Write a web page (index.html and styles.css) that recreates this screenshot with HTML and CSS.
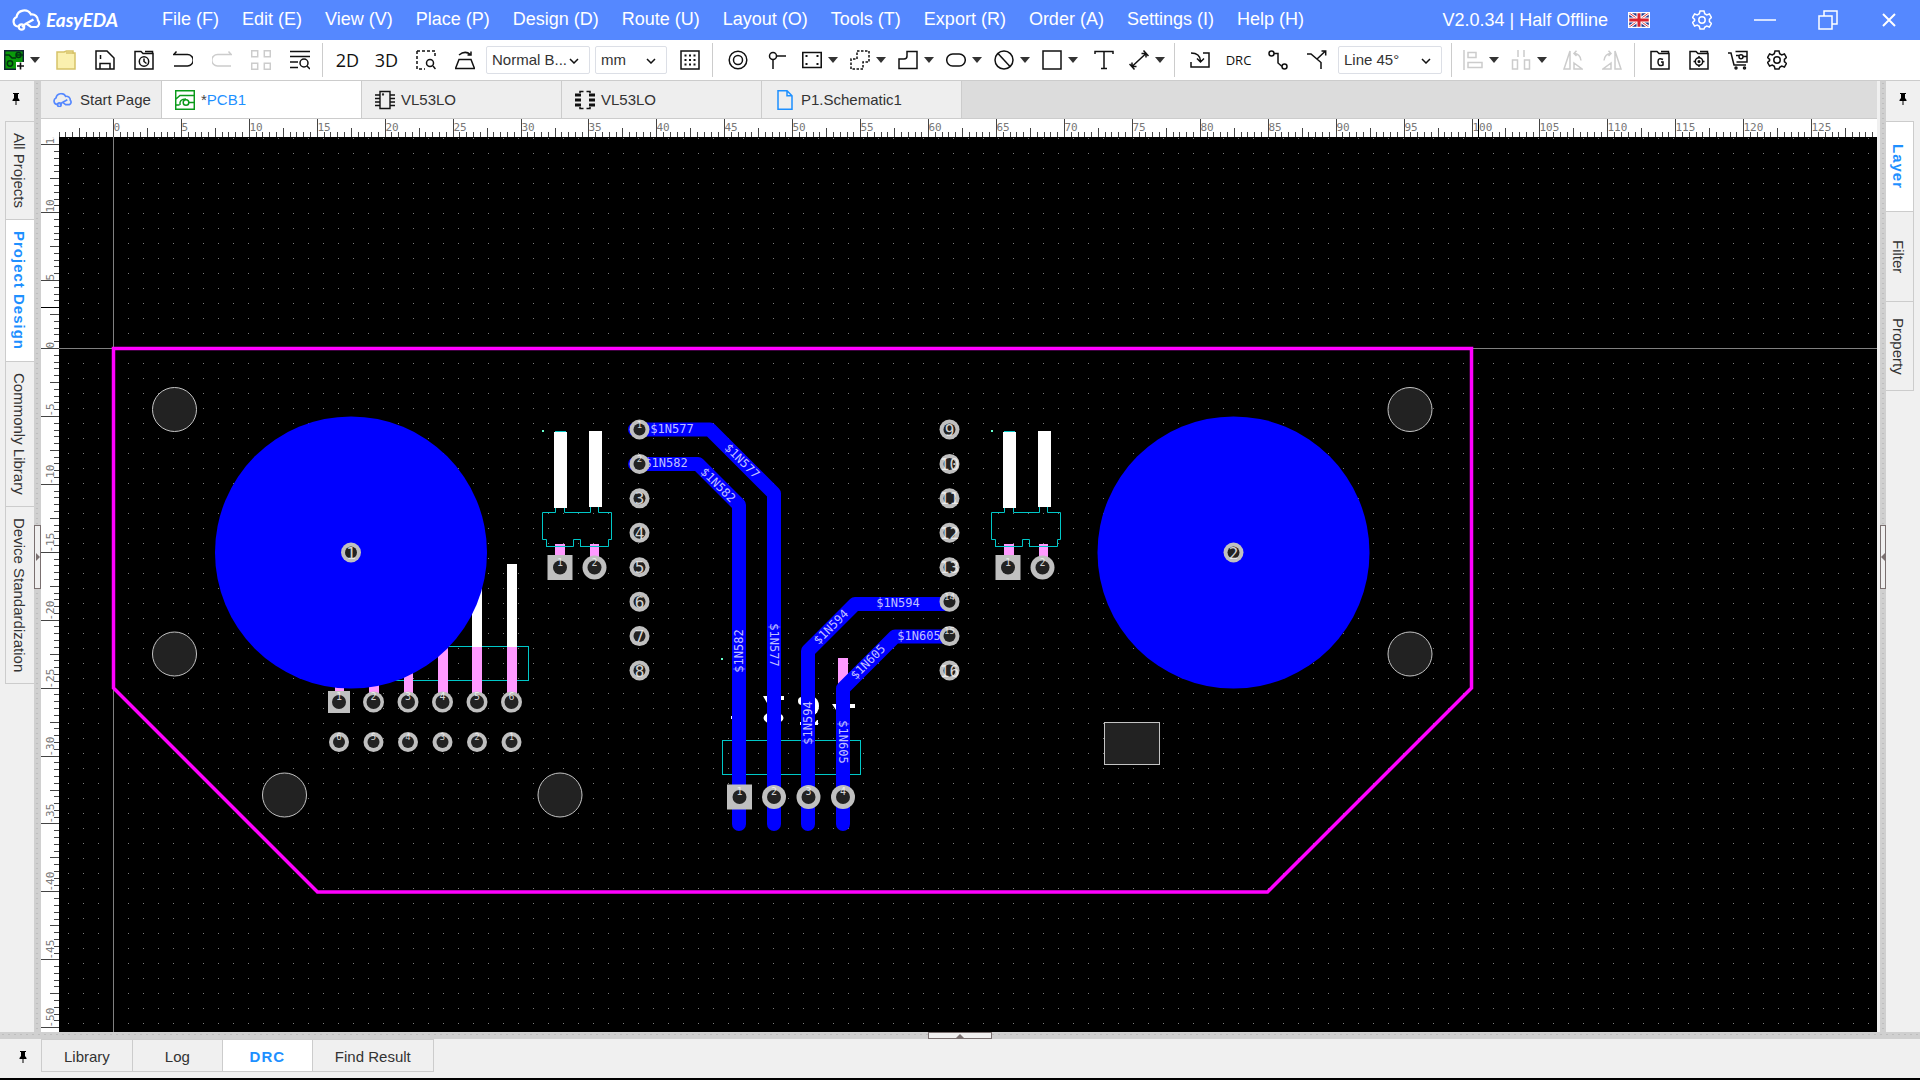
FILE: index.html
```html
<!DOCTYPE html>
<html lang="en">
<head>
<meta charset="utf-8">
<title>EasyEDA - PCB1</title>
<meta name="viewport" content="width=device-width, initial-scale=1">
<link rel="stylesheet" href="styles.css">
</head>
<body>
<svg class="sprite" aria-hidden="true">
  <symbol id="i-cloud" viewBox="0 0 30 22"><path d="M8 17.500H6A5 5 0 0 1 4.500 8a7.800 7.800 0 0 1 14.500-2.500A6 6 0 0 1 26 11.500a4 4 0 0 1-1.500 6.500h-5.500l-4-3M10 18l3.500-3 8-4.500"/><circle cx="9.500" cy="18" r="2.700"/></symbol>
  <symbol id="i-pin" viewBox="0 0 10 14"><path d="M2 1h6v1H7v4l1.500 2v1H5.500v4h-1V9h-3V8L3 6V2H2z" fill="#000" stroke="none"/></symbol>
  <symbol id="i-gear" viewBox="0 0 20 20"><path d="M8 1h4l.700 2.700 2 1.200 2.700-.900 2 3.500-2 1.900v2.200l2 1.900-2 3.500-2.700-.900-2 1.200L12 19H8l-.700-2.700-2-1.200-2.700.900-2-3.500 2-1.900V9.400l-2-1.900 2-3.500 2.700.900 2-1.200z"/><circle cx="10" cy="10" r="3.200"/></symbol>
  <symbol id="i-caret" viewBox="0 0 10 6"><path d="M0 0h10L5 6z" fill="#333" stroke="none"/></symbol>
  <symbol id="i-chev" viewBox="0 0 10 6"><path d="M1 1l4 4 4-4"/></symbol>
  <symbol id="i-chip" viewBox="0 0 20 20"><path d="M5 1.500h10v17H5zM0 5h5M0 8.500h5M0 12h5M0 15.500h5M15 5h5M15 8.500h5M15 12h5M15 15.500h5" stroke-width="1.400"/><circle cx="8" cy="4.500" r=".4"/></symbol>
  <symbol id="i-footprint" viewBox="0 0 20 20"><path d="M5 3V1.500h3.500M11.500 1.500H15V3M5 17v1.500h3.500M11.500 18.500H15V17" /><path d="M0 5h6M0 10h6M0 15h6M14 5h6M14 10h6M14 15h6" stroke-width="3"/></symbol>
</svg>

<header class="titlebar">
  <a class="brand" href="#"><svg class="brand-mark"><use href="#i-cloud"/></svg><span>EasyEDA</span></a>
  <nav class="menu" aria-label="Main menu">
    <button>File (F)</button><button>Edit (E)</button><button>View (V)</button><button>Place (P)</button><button>Design (D)</button><button>Route (U)</button><button>Layout (O)</button><button>Tools (T)</button><button>Export (R)</button><button>Order (A)</button><button>Settings (I)</button><button>Help (H)</button>
  </nav>
  <div class="window-tools">
    <span class="version">V2.0.34 | Half Offline</span>
    <button class="flag" aria-label="Language"><svg viewBox="0 0 22 16"><path fill="#223a8c" d="M0 0h22v16H0z"/><path d="M0 0l22 16M22 0L0 16" stroke="#fff" stroke-width="3"/><path d="M0 0l22 16M22 0L0 16" stroke="#d33" stroke-width="1"/><path d="M11 0v16M0 8h22" stroke="#fff" stroke-width="5"/><path d="M11 0v16M0 8h22" stroke="#d8232f" stroke-width="3"/><path d="M.5.5h21v15H.5z" fill="none" stroke="#fff"/></svg></button>
    <button aria-label="Preferences"><svg class="ico"><use href="#i-gear"/></svg></button>
    <button aria-label="Minimize"><svg class="ico wide" viewBox="0 0 24 20"><path d="M1 10h22"/></svg></button>
    <button aria-label="Restore"><svg class="ico" viewBox="0 0 20 20"><path d="M1 6h13v13H1zM6 6V1h13v13h-5"/></svg></button>
    <button aria-label="Close"><svg class="ico" viewBox="0 0 20 20"><path d="M4 4l12 12M16 4L4 16" stroke-width="2"/></svg></button>
  </div>
</header>

<div class="toolbar" role="toolbar" aria-label="Tools">
  <button class="tool drop" aria-label="New"><svg class="ico" viewBox="0 0 20 20"><path d="M.7.700h18.600v18.600H.700z" fill="#0a9a0a" stroke="#123"/><path d="M1 5h4l3 3h4M12 5h7" stroke="#031"/><circle cx="14.500" cy="5" r="2.500" stroke="#031"/><circle cx="6" cy="13.500" r="2.700" stroke="#031"/><path d="M12 12h8v8h-8z" fill="#fff" stroke="none"/><path d="M16.500 12.500v7M13 16h7" stroke-width="1.600"/></svg><svg class="caret"><use href="#i-caret"/></svg></button>
  <button class="tool" aria-label="Open"><svg class="ico" viewBox="0 0 20 20"><path d="M1 2h7l2.500-1H17v2h2v16H1z" fill="#faf0ae" stroke="#d6c268"/><path d="M10 3h8" stroke="#d6c268"/></svg></button>
  <button class="tool" aria-label="Save"><svg class="ico" viewBox="0 0 20 20"><path d="M1 1h11l7 7v11H1zM5 19v-5.500h10V19M5.500 5v4"/></svg></button>
  <button class="tool" aria-label="Recent"><svg class="ico" viewBox="0 0 20 20"><path d="M1 19V1.500h6L9 3.500h10V19zM11 1.500h7.500v2"/><circle cx="10" cy="11.500" r="4.700"/><path d="M10 8.500v3l2.500 2"/></svg></button>
  <button class="tool" aria-label="Undo"><svg class="ico" viewBox="0 0 20 20"><path d="M3.500 1.500L.700 4.500h13.800a5.700 5.700 0 0 1 0 11.400H1"/></svg></button>
  <button class="tool" aria-label="Redo" disabled><svg class="ico" viewBox="0 0 20 20"><path d="M16.500 1.500l2.800 3H5.500a5.700 5.700 0 0 0 0 11.400H19"/></svg></button>
  <button class="tool" aria-label="Array" disabled><svg class="ico" viewBox="0 0 20 20"><path d="M.700.700h6v6h-6zM13.300.700h6v6h-6zM.700 13.300h6v6h-6zM13.300 13.300h6v6h-6z"/></svg></button>
  <button class="tool" aria-label="Find"><svg class="ico" viewBox="0 0 20 20"><path d="M0 1.500h20M0 6.500h20M0 12h8M0 17.500h8"/><circle cx="14" cy="13" r="4"/><path d="M17 16l3 3"/></svg></button>
  <i class="sep"></i>
  <button class="tool text">2D</button>
  <button class="tool text">3D</button>
  <button class="tool" aria-label="Zoom to area"><svg class="ico" viewBox="0 0 20 20"><path d="M1 1h18v7M1 1v18h8" stroke-dasharray="3 2"/><circle cx="14" cy="13" r="3.500"/><path d="M17 16l2.500 3"/></svg></button>
  <button class="tool" aria-label="Flip board"><svg class="ico" viewBox="0 0 20 20"><path d="M4 9.500h12l3.500 9H.500zM4 5q6-5 11.500-.500M12.500 5H16V1.500"/></svg></button>
  <label class="pick"><select class="w-bright" aria-label="Brightness"><option>Normal B...</option></select><svg><use href="#i-chev"/></svg></label>
  <label class="pick"><select class="w-unit" aria-label="Unit"><option>mm</option></select><svg><use href="#i-chev"/></svg></label>
  <button class="tool" aria-label="Grid"><svg class="ico" viewBox="0 0 20 20"><path d="M1 1h18v18H1z"/><path d="M4.500 5.500h12M4.500 10h12M4.500 14.500h12" stroke-width="2.200" stroke-dasharray="2 2.500"/></svg></button>
  <i class="sep"></i>
  <button class="tool" aria-label="Pad"><svg class="ico" viewBox="0 0 20 20"><circle cx="10" cy="10" r="8.800"/><circle cx="10" cy="10" r="4.500"/></svg></button>
  <button class="tool" aria-label="Via"><svg class="ico" viewBox="0 0 20 20"><circle cx="6" cy="6" r="3.500"/><path d="M9.500 6H19M6 9.500V19"/></svg></button>
  <button class="tool drop" aria-label="Region"><svg class="ico" viewBox="0 0 20 20"><path d="M.700 2.500h18.600v15H.700z" stroke-width="1.700"/><path d="M3.500 6h2M14.500 6h2M3.500 14h2M14.500 14h2" stroke-width="2"/></svg><svg class="caret"><use href="#i-caret"/></svg></button>
  <button class="tool drop" aria-label="Cutout"><svg class="ico" viewBox="0 0 20 20"><path d="M7 1h12v11h-6v7H1V9h6z" stroke-dasharray="2.500 1.500"/></svg><svg class="caret"><use href="#i-caret"/></svg></button>
  <button class="tool drop" aria-label="Copper area"><svg class="ico" viewBox="0 0 20 20"><path d="M9 1.500h10v17H1V9h5q3 0 3-3z"/></svg><svg class="caret"><use href="#i-caret"/></svg></button>
  <button class="tool drop" aria-label="Fill"><svg class="ico" viewBox="0 0 20 20"><rect x=".7" y="4" width="18.600" height="12" rx="6"/></svg><svg class="caret"><use href="#i-caret"/></svg></button>
  <button class="tool drop" aria-label="Keepout"><svg class="ico" viewBox="0 0 20 20"><circle cx="10" cy="10" r="9"/><path d="M4 3.500L16 16.500"/></svg><svg class="caret"><use href="#i-caret"/></svg></button>
  <button class="tool drop" aria-label="Rectangle"><svg class="ico" viewBox="0 0 20 20"><path d="M1 1h18v18H1z"/></svg><svg class="caret"><use href="#i-caret"/></svg></button>
  <button class="tool" aria-label="Text"><svg class="ico" viewBox="0 0 20 20"><path d="M1 4V1.500h18V4M10 1.500v17M7 18.500h6"/></svg></button>
  <button class="tool drop" aria-label="Dimension"><svg class="ico" viewBox="0 0 20 20"><path d="M3 16.500L17 3.500M3 12.500v4h4.500M12.500 3.500H17v4M14.500.500l5 5.500M.500 14l5 5.500"/></svg><svg class="caret"><use href="#i-caret"/></svg></button>
  <i class="sep"></i>
  <button class="tool" aria-label="Import changes"><svg class="ico" viewBox="0 0 20 20"><path d="M13 3h6v14H1v-5M1 3q9 0 9.500 8M7 8.500l3.500 3.500L14 8.500"/></svg></button>
  <button class="tool drc">DRC</button>
  <button class="tool" aria-label="Route track"><svg class="ico" viewBox="0 0 20 20"><circle cx="3.500" cy="3.500" r="2.500"/><circle cx="16.500" cy="16.500" r="2.500"/><path d="M6 3.500h4v9.500l4 3.500"/></svg></button>
  <button class="tool" aria-label="Differential pair"><svg class="ico" viewBox="0 0 20 20"><path d="M0 4h4l10 8.500V19M9.500 9.500L18.500 1M14.500 1h4.200v4.500"/></svg></button>
  <label class="pick pick-last"><select class="w-route" aria-label="Routing corner"><option>Line 45°</option></select><svg><use href="#i-chev"/></svg></label>
  <i class="sep"></i>
  <button class="tool drop" aria-label="Align"><svg class="ico pale" viewBox="0 0 20 20"><path d="M1 0v20M5 2.500h8v5H5zM5 12.500h14v5H5z"/></svg><svg class="caret"><use href="#i-caret"/></svg></button>
  <button class="tool drop" aria-label="Distribute"><svg class="ico pale" viewBox="0 0 20 20"><path d="M7 0v7M13 0v7M1.500 10h5v9h-5zM13.500 10h5v9h-5z"/></svg><svg class="caret"><use href="#i-caret"/></svg></button>
  <button class="tool" aria-label="Rotate left" disabled><svg class="ico" viewBox="0 0 20 20"><path d="M7 1v18H1zM11 13l8 6h-8zM11 3.500q6 0 7 7M13.500.800L11 3.500 13.500 6"/></svg></button>
  <button class="tool" aria-label="Rotate right" disabled><svg class="ico" viewBox="0 0 20 20"><path d="M13 1v18h6zM9 13l-8 6h8zM9 3.500q-6 0-7 7M6.500.800L9 3.500 6.500 6"/></svg></button>
  <i class="sep"></i>
  <button class="tool" aria-label="Export Gerber"><svg class="ico" viewBox="0 0 20 20"><path d="M1 19V1.500h6L9 3.500h10V19zM11 1.500h7.500v2M13 9.500q-5-2.500-5 2.500t5 3v-3h-2"/></svg></button>
  <button class="tool" aria-label="Export coordinates"><svg class="ico" viewBox="0 0 20 20"><path d="M1 19V1.500h6L9 3.500h10V19zM11 1.500h7.500v2M10 6v2M10 15v2M4.500 11.500h2M13.500 11.500h2"/><circle cx="10" cy="11.500" r="3.700"/><circle cx="10" cy="11.500" r=".8"/></svg></button>
  <button class="tool" aria-label="Order PCB"><svg class="ico" viewBox="0 0 20 20"><path d="M0 3h3l3 12h12M7.500 1.500H19v10.500H8.500M8 5.500h3M15 6.500h4"/><circle cx="13" cy="6.800" r="2"/><circle cx="8" cy="18" r="1"/><circle cx="16.500" cy="18" r="1"/></svg></button>
  <button class="tool" aria-label="Settings"><svg class="ico"><use href="#i-gear"/></svg></button>
</div>

<div class="workspace">
  <aside class="side left">
    <div class="side-body">
      <button class="pin" aria-label="Pin left panel"><svg><use href="#i-pin"/></svg></button>
      <button class="vtab">All Projects</button>
      <button class="vtab active">Project Design</button>
      <button class="vtab">Commonly Library</button>
      <button class="vtab">Device Standardization</button>
    </div>
    <div class="splitter"><button class="grip" aria-label="Expand left panel"></button></div>
  </aside>

  <main class="editor">
    <nav class="tabs" aria-label="Documents">
      <button class="tab start"><svg class="ico blue" viewBox="0 0 30 22"><use href="#i-cloud"/></svg>Start Page</button>
      <button class="tab active"><svg class="ico green" viewBox="0 0 20 20"><path d="M.700.700h18.600v18.600H.700zM1 9l4-3.500h14M1 15h3.500"/><circle cx="11" cy="12.500" r="2.800"/><path d="M14 12.500h5M5 15q-1-6 6-6"/></svg><span><span class="dirty">*</span>PCB1</span></button>
      <button class="tab"><svg class="ico"><use href="#i-chip"/></svg>VL53LO</button>
      <button class="tab"><svg class="ico"><use href="#i-footprint"/></svg>VL53LO</button>
      <button class="tab"><svg class="ico doc" viewBox="0 0 20 20"><path d="M3 .700h9l5 5v13.600H3zM12 .700v5h5"/></svg>P1.Schematic1</button>
    </nav>
    <div class="stage">
      <div class="corner"></div>
      <svg class="ruler" id="ruler-x"></svg>
      <svg class="ruler" id="ruler-y"></svg>
      <svg class="board" role="img" aria-label="PCB layout">
        <defs>
          <pattern id="dots" width="15" height="15" patternUnits="userSpaceOnUse" x="8" y="3"><path d="M0 0h1v1H0z" fill="#7c7c7c"/></pattern>
          <g id="jumper">
            <path d="M542 430h2v2h-2z" fill="#6fc"/>
            <path d="M555 431.500h11M555.500 508v4.500h-13v27h4v7h27v-7h7v7h28v-7h3v-27h-13V507M564.500 508v4.500h26V507" fill="none" stroke="#00c8c8"/>
            <path d="M554 432h13v76h-13zM589 431h13v76h-13z" fill="#fff"/>
            <path d="M555 544h10v14h-10zM590 544h9v14h-9z" fill="#f9f"/>
            <path d="M546 546.500h27M580 546.500h28" stroke="#00c8c8"/>
          </g>
        </defs>
        <!-- drawing units are pixels; the shift puts the board origin on the ruler zero -->
        <g transform="translate(-59 -137)">
          <rect x="59" y="137" width="100%" height="100%" fill="url(#dots)"/>
          <path d="M113.500 137v4000M59 348.500h5000" stroke="#808080"/>
          <g fill="#222" stroke="#c4c4c4">
            <circle cx="174.500" cy="409.500" r="22"/><circle cx="174.500" cy="654" r="22"/>
            <circle cx="1410" cy="409.500" r="22"/><circle cx="1410" cy="654" r="22"/>
            <circle cx="284.500" cy="795" r="22"/><circle cx="560" cy="795" r="22"/>
            <rect x="1104.500" y="722.500" width="55" height="42"/>
          </g>
          <rect x="322.500" y="646.500" width="206" height="34" fill="none" stroke="#00c8c8"/>
          <path d="M507 564h10v83h-10zM472 564h10v83h-10z" fill="#fff"/>
          <path d="M335 647h9v50h-9zM369 647h10v50h-10zM404 647h9v50h-9zM438 647h10v50h-10zM472 647h10v50h-10zM507 647h10v50h-10z" fill="#f9f"/>
          <use href="#jumper"/><use href="#jumper" x="449"/>
          <rect x="722.500" y="740.500" width="138" height="34" fill="none" stroke="#00c8c8"/>
          <path d="M721 658h2v2h-2z" fill="#6fc"/>
          <path d="M838 658h10v30h-10z" fill="#f9f"/>
          <path d="M763 696h21v4h-3l-14 3zM731 716h3v3h-3zM832 704h23v4h-6l-13 2zM800 722h4l8 4 5-6h1v5h-18z" fill="#fff"/>
          <ellipse cx="773.500" cy="718" rx="10" ry="6" fill="#fff"/><ellipse cx="802" cy="701" rx="4" ry="4" fill="#fff"/><ellipse cx="813" cy="706" rx="6" ry="9" fill="#fff"/>
          <g fill="none" stroke="#00f" stroke-width="14" stroke-linecap="round" stroke-linejoin="round">
            <path d="M635 429.500h75l64 64V824"/>
            <path d="M635 464h63l41 41V824"/>
            <path d="M949 604h-94l-47 47V824"/>
            <path d="M949 636.500h-54l-52 52V824"/>
          </g>
          <g fill="#00f"><circle cx="351" cy="552.500" r="136"/><circle cx="1233.500" cy="552.500" r="136"/></g>
          <g class="nets" id="nets"></g>
          <g id="pads"></g>
          <path d="M113.500 348.500h1358v339.500l-204 204H317.500l-204-204z" fill="none" stroke="#f0f" stroke-width="3.500"/>
        </g>
      </svg>
    </div>
  </main>

  <aside class="side right">
    <div class="splitter"><button class="grip" aria-label="Expand right panel"></button></div>
    <div class="side-body">
      <button class="pin" aria-label="Pin right panel"><svg><use href="#i-pin"/></svg></button>
      <button class="vtab active">Layer</button>
      <button class="vtab">Filter</button>
      <button class="vtab">Property</button>
    </div>
  </aside>
</div>

<footer class="bottom">
  <div class="splitter"><button class="grip" aria-label="Expand bottom panel"></button></div>
  <div class="bottom-body">
    <button class="pin" aria-label="Pin bottom panel"><svg><use href="#i-pin"/></svg></button>
    <button class="btab">Library</button>
    <button class="btab">Log</button>
    <button class="btab active">DRC</button>
    <button class="btab">Find Result</button>
  </div>
</footer>
<script src="board.js"></script>
</body>
</html>
```

FILE: styles.css
```css
* { box-sizing: border-box; }

html, body { height: 100%; }

body {
  margin: 0;
  display: flex;
  flex-direction: column;
  border-bottom: 2px solid #000;
  background: #f0f0f0;
  color: #333;
  font: 15px/20px "Liberation Sans", Arial, sans-serif;
  overflow: hidden;
}

button {
  margin: 0;
  padding: 0;
  border: 0;
  background: none;
  color: inherit;
  font: inherit;
  white-space: nowrap;
}

svg { display: block; fill: none; stroke: currentColor; stroke-width: 1.5; }
.sprite { display: none; }
.ico { width: 20px; height: 20px; flex: none; }

/* title bar */
.titlebar {
  flex: none;
  height: 40px;
  display: flex;
  align-items: center;
  padding: 0 1px 0 12px;
  background: #5588ff;
  color: #fff;
  font-size: 18px;
}
.brand {
  width: 150px;
  display: flex;
  align-items: center;
  gap: 4px;
  color: #fff;
  text-decoration: none;
  font: italic 700 19px/24px Lato, "Open Sans", sans-serif;
}
.brand-mark { width: 30px; height: 22px; stroke-width: 2.2; }
.menu { display: flex; gap: 23px; height: 32px; }
.menu button { height: 30px; }
.window-tools { margin-left: auto; display: flex; align-items: center; }
.window-tools button { width: 63px; display: flex; justify-content: center; }
.window-tools button:last-child { width: 60px; }
.version { height: 20px; }
.window-tools .flag { width: 62px; }
.flag svg { width: 22px; height: 16px; }
.wide { width: 24px; }

/* toolbar */
.toolbar {
  flex: none;
  height: 41px;
  display: flex;
  align-items: center;
  margin-left: -2px;
  border-bottom: 1px solid #ccc;
  background: #fff;
  color: #111;
}
.tool { flex: none; width: 39px; height: 32px; display: flex; align-items: center; justify-content: center; }
.tool.drop { width: 48px; gap: 6px; }
.tool:disabled, .pale { color: #ccc; }
.tool.text { font: 18px/24px "Open Sans", sans-serif; }
.tool.drc { font: 13px/20px "Open Sans", sans-serif; }
.caret { width: 10px; height: 6px; flex: none; }
.sep { flex: none; width: 1px; height: 34px; margin: 0 5px 0 3px; background: #ccc; }
.pick { flex: none; position: relative; margin: 0 3px 0 2px; }
.pick-last { margin-right: 6px; }
.pick select {
  height: 28px;
  padding: 0 5px;
  border: 1px solid #dcdfe6;
  border-radius: 2px;
  appearance: none;
  background: #fff;
  color: #333;
  font: inherit;
}
.pick svg { position: absolute; right: 11px; top: 12px; width: 10px; height: 6px; pointer-events: none; }
.w-bright { width: 104px; }
.w-unit { width: 72px; }
.w-route { width: 104px; }

/* side panels */
.workspace { flex: 1; min-height: 0; display: flex; }
.side { flex: none; display: flex; }
.side-body { display: flex; flex-direction: column; }
.left .side-body { width: 34px; padding-left: 5px; }
.right .side-body { width: 34px; padding-right: 6px; }
.pin { display: flex; align-items: center; justify-content: center; }
.pin svg { width: 10px; height: 14px; }
.side .pin { height: 40px; padding-bottom: 4px; flex: none; }
.left .pin { width: 22px; }
.right .pin { width: 34px; }
.vtab {
  display: flex;
  align-items: center;
  justify-content: center;
  padding: 11px 2px 11px 0;
  border: 1px solid #ccc;
  border-bottom-width: 0;
  writing-mode: vertical-rl;
}
.vtab:last-child { border-bottom-width: 1px; }
.left .vtab { border-right: 0; }
.right .vtab { border-left: 0; height: 90px; padding-right: 4px; }
.active { background: #fff; color: #1e90ff; }
.vtab.active, .btab.active { font-weight: 700; letter-spacing: 1px; }

.splitter {
  flex: none;
  display: flex;
  align-items: center;
  justify-content: center;
  background: radial-gradient(circle, #bdbdbd 1px, transparent 1px) 0 0 / 6px 5px #d0d0d0;
}
.side .splitter { width: 7px; }
.right .splitter { width: 6px; }
.grip { border: 1px solid #7a7070; background: #f0f0f0; display: flex; align-items: center; justify-content: center; }
.side .grip { width: 100%; height: 64px; }
.grip::before { content: ""; border: 4px solid transparent; }
.left .grip::before { border-left-color: #7a7070; border-right-width: 0; }
.right .grip::before { border-right-color: #7a7070; border-left-width: 0; }
.bottom .grip::before { border-bottom-color: #7a7070; border-top-width: 0; }

/* document tabs */
.editor { flex: 1; min-width: 0; display: flex; flex-direction: column; margin-right: 3px; }
.tabs { flex: none; height: 38px; display: flex; border-bottom: 1px solid #ccc; background: #dcdcdc; }
.tab {
  width: 200px;
  display: flex;
  align-items: center;
  gap: 6px;
  padding-left: 13px;
  border-right: 1px solid #ccc;
  background: #eee;
}
.tab.start { width: 121px; padding-left: 12px; gap: 7px; }
.tab.active { background: #fff; }
.tab svg { color: #111; }
.tab .blue { color: #5588ff; stroke-width: 2.5; }
.tab .green { color: #0a9a1a; }
.tab .doc { color: #1e90ff; }
.dirty { color: #444; }

/* canvas */
.stage {
  flex: 1;
  min-height: 0;
  display: grid;
  grid-template: 18px minmax(0, 1fr) / 18px minmax(0, 1fr);
}
.corner, .ruler { background: #fff; }
.ruler, .board { width: 100%; height: 100%; overflow: hidden; }
.ruler { stroke: #444; stroke-width: 1; }
.ruler text { fill: #777; stroke: none; font: 11px "DejaVu Sans Mono", monospace; }
.board { background: #000; stroke: none; stroke-width: 1; }
.board text { font-family: "DejaVu Sans Mono", monospace; text-anchor: middle; stroke: none; }
.nets text { fill: #c0c0ff; font-size: 12px; }
.pad { fill: #c0c0c0; }
.drill { fill: #222; }
.num { fill: #f4f4f4; fill-opacity: .85; font-size: 10px; }
.num.small { font-size: 9px; }
.num.big { font-size: 16px; }

/* bottom panel */
.bottom { flex: none; }
.bottom .splitter { height: 7px; }
.bottom .grip { width: 64px; height: 7px; }
.bottom-body { height: 39px; display: flex; align-items: flex-start; }
.bottom .pin { width: 41px; height: 36px; padding-left: 4px; }
.btab { height: 33px; min-width: 90px; padding: 3px 22px 0; border: 1px solid #ccc; border-left-width: 0; }
.pin + .btab { border-left-width: 1px; }
```

FILE: board.js
```js
const NS = 'http://www.w3.org/2000/svg';
const PX_PER_MM = 13.585;

function add(parent, name, attrs, text) {
  const node = document.createElementNS(NS, name);
  for (const key in attrs) node.setAttribute(key, attrs[key]);
  if (text !== undefined) node.textContent = text;
  parent.appendChild(node);
}

/* rulers: a tick each 0.5 mm, a longer one each 2.5 mm, a label each 5 mm */
const rx = document.getElementById('ruler-x');
const ry = document.getElementById('ruler-y');
const tickLength = i => (i % 10 === 0 ? 18 : i % 5 === 0 ? 9 : 5);

function drawRulers() {
  const width = rx.clientWidth;
  const height = ry.clientHeight;
  rx.replaceChildren();
  ry.replaceChildren();
  for (let i = -8; ; i++) {
    const p = Math.round(54 + i * PX_PER_MM / 2) + 0.5;
    if (p > width) break;
    add(rx, 'path', { d: `M${p} ${18 - tickLength(i)}V18` });
    if (i % 10 === 0 && p + 24 < width) add(rx, 'text', { x: p, y: 12 }, i / 2);
  }
  for (let i = 30; ; i--) {
    const p = Math.round(211 - i * PX_PER_MM / 2) + 0.5;
    if (p > height) break;
    add(ry, 'path', { d: `M${18 - tickLength(i)} ${p}H18` });
    if (i % 10 === 0) add(ry, 'text', { transform: `translate(13 ${p}) rotate(-90)` }, i / 2);
  }
  /* cursor position */
  add(rx, 'path', { d: 'M1419.5 0V18', stroke: '#000' });
  add(ry, 'path', { d: 'M0 170.5H18', stroke: '#000' });
}
drawRulers();
window.addEventListener('resize', drawRulers);

/* net names on the tracks: text, x, y, angle */
const nets = document.getElementById('nets');
[
  ['$1N577', 672, 429, 0], ['$1N577', 742, 461, 45], ['$1N577', 774, 645, 90],
  ['$1N582', 666, 463, 0], ['$1N582', 718, 485, 45], ['$1N582', 739, 651, -90],
  ['$1N594', 898, 603, 0], ['$1N594', 831, 627, -45], ['$1N594', 808, 723, -90],
  ['$1N605', 919, 636, 0], ['$1N605', 868, 662, -45], ['$1N605', 843, 742, 90]
].forEach(([t, x, y, a]) => add(nets, 'text', { transform: `translate(${x} ${y}) rotate(${a})`, y: 4 }, t));

const pads = document.getElementById('pads');
function pad(x, y, r, hole, label, cls, square) {
  if (square) add(pads, 'rect', { class: 'pad', x: x - r, y: y - r, width: 2 * r, height: 2 * r });
  else add(pads, 'circle', { class: 'pad', cx: x, cy: y, r });
  add(pads, 'circle', { class: 'drill', cx: x, cy: y, r: hole });
  const dy = cls === 'big' ? 6 : -2;
  add(pads, 'text', { class: 'num ' + cls, x, y: y + dy }, label);
}
const PITCH = 34.5;
for (let i = 0; i < 8; i++) {
  pad(639.5, 429.5 + i * 34.43, 10, 6, i + 1, i < 2 ? 'small' : 'big');
  pad(949.5, 429.5 + i * 34.43, 10, 6, i + 9, i === 5 || i === 6 ? 'small' : 'big');
}
for (let i = 0; i < 6; i++) {
  pad(339 + i * PITCH, 702, i ? 10.5 : 11, 7, i + 1, '', i === 0);
  pad(339 + i * PITCH, 742, 10, 6, 6 - i, 'small');
}
for (let i = 0; i < 4; i++) pad(739.5 + i * PITCH, 797, i ? 12 : 12.5, 7, i + 1, '', i === 0);
for (const dx of [0, 448]) {
  pad(560 + dx, 567.5, 12.5, 7, 1, '', true);
  pad(594.5 + dx, 567.5, 12, 7, 2, '');
}
pad(351, 552.5, 10, 6, 1, 'big');
pad(1233.5, 552.5, 10, 6, 2, 'big');
```
